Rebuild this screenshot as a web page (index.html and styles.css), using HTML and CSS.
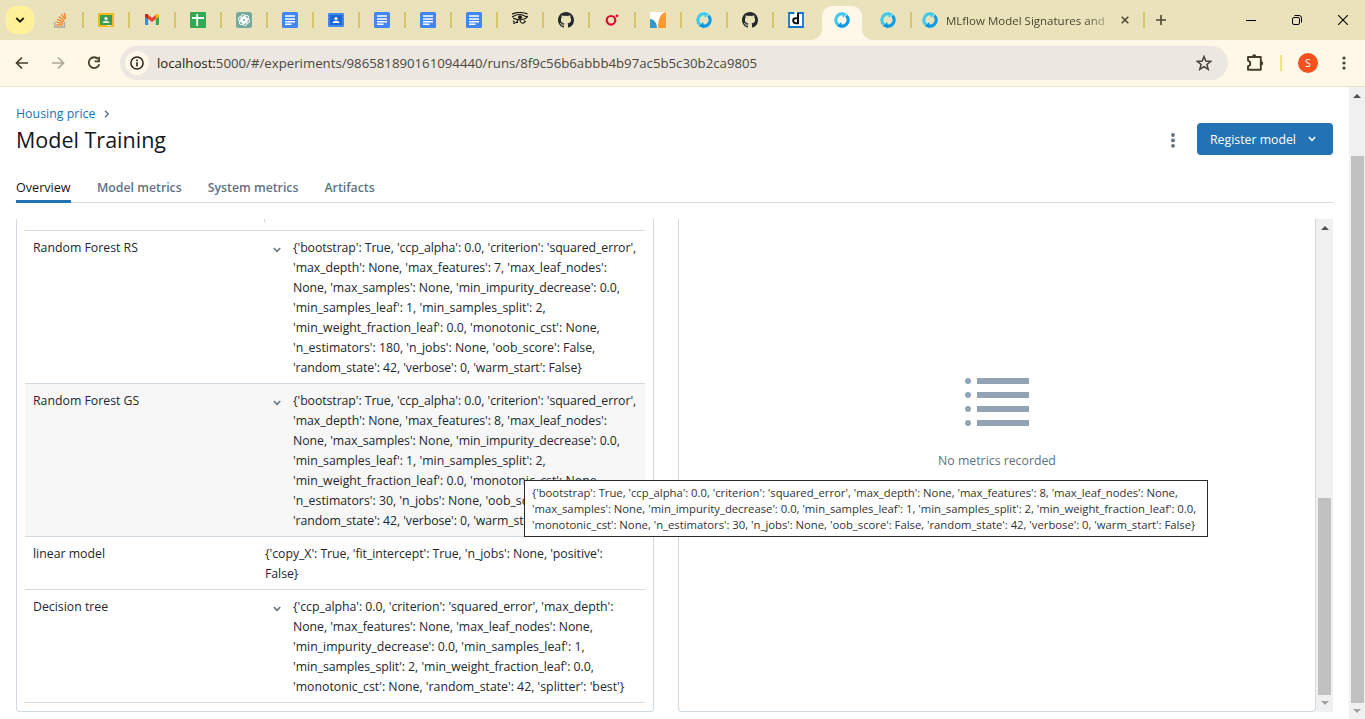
FILE: index.html
```html
<!DOCTYPE html>
<html lang="en">
<head>
<meta charset="utf-8">
<title>Model Training</title>
<link rel="stylesheet" href="styles.css">
</head>
<body>
<svg width="0" height="0" class="defs">
  <defs>
    <symbol id="docs" viewBox="0 0 16 16"><rect width="16" height="16" rx="1.5" fill="#4285f4"/><path d="M3 4h10M3 7h10M3 9.700h10M3 12.300h6.500" stroke="#fff" stroke-width="1.600"/></symbol>
    <symbol id="mlflow" viewBox="0 0 16 16"><path d="M4.300 12.900A6.200 6.200 0 0 1 9.600 2" fill="none" stroke="#43c9ed" stroke-width="3"/><path d="M8.200 0 13 1.700 8.800 6z" fill="#43c9ed"/><path d="M12.300 3.600A6.200 6.200 0 0 1 6.600 14" fill="none" stroke="#0f9ce6" stroke-width="3.100"/><path d="M7.800 16 2.900 14.300 7.200 10z" fill="#0194e2"/></symbol>
    <symbol id="github" viewBox="0 0 16 16"><path fill="#24292f" d="M8 0C3.58 0 0 3.58 0 8c0 3.54 2.29 6.53 5.47 7.59.4.07.55-.17.55-.38 0-.19-.01-.82-.01-1.49-2.01.37-2.53-.49-2.69-.94-.09-.23-.48-.94-.82-1.13-.28-.15-.68-.52-.01-.53.63-.01 1.08.58 1.23.82.72 1.21 1.87.87 2.33.66.07-.52.28-.87.51-1.07-1.78-.2-3.64-.89-3.64-3.95 0-.87.31-1.59.82-2.15-.08-.2-.36-1.02.08-2.12 0 0 .67-.21 2.2.82.64-.18 1.32-.27 2-.27s1.36.09 2 .27c1.53-1.04 2.2-.82 2.2-.82.44 1.1.16 1.92.08 2.12.51.56.82 1.27.82 2.15 0 3.07-1.87 3.75-3.65 3.95.29.25.54.73.54 1.48 0 1.07-.01 1.93-.01 2.2 0 .21.15.46.55.38A8.01 8.01 0 0 0 16 8c0-4.42-3.58-8-8-8z"/></symbol>
    <symbol id="chev" viewBox="0 0 8 6"><path d="M.8 1 4 4.300 7.200 1" fill="none" stroke="currentColor" stroke-width="1.500"/></symbol>
  </defs>
</svg>
<div class="tabstrip">
  <div class="tab-search"><svg width="10" height="6" viewBox="0 0 10 6"><path d="M1.300 1 5 4.600 8.700 1" fill="none" stroke="#1f1c0c" stroke-width="1.900"/></svg></div>
  <div class="tab"><svg viewBox="0 0 16 16"><path d="M2.800 10v5h9.700v-5" fill="none" stroke="#a9a9a3" stroke-width="1.300"/><path d="M4.300 12.900h6.800M4.500 10.200l6.700 1.100M5.200 7.300l6.300 2.700M7 4.500l5.200 4.200M9.400 2.200l3.800 5.200M12.400 1l1.200 5.200" stroke="#f48024" stroke-width="1.300"/></svg></div>
  <div class="tab"><svg viewBox="0 0 16 16"><rect y="1" width="16" height="14" rx="1" fill="#f5ba15"/><rect x="2" y="3" width="12" height="10" fill="#3c9b50"/><circle cx="8" cy="6.500" r="1.600" fill="#fff"/><path d="M4.500 11c0-3 7-3 7 0z" fill="#d9efdc"/><path d="M9 13h4v1H9z" fill="#e8f0e0"/></svg></div>
  <div class="tab"><svg viewBox="0 0 16 16"><path d="M1 3.500h3.200V13H2a1 1 0 0 1-1-1z" fill="#4285f4"/><path d="M11.800 3.500H15V12a1 1 0 0 1-1 1h-2.200z" fill="#34a853"/><path d="M1 4.500V3.200C1 2 2.500 1.500 3.600 2.400L8 5.800l4.400-3.400C13.500 1.500 15 2 15 3.200v1.300L8 9.900z" fill="#ea4335"/><path d="M11.800 3l.8-.7C13.500 1.600 15 2 15 3.200v1.600L11.800 7z" fill="#fbbc04"/><path d="M1 4.800V3.200C1 2 2.500 1.600 3.500 2.300l.7.600V7z" fill="#c5221f"/></svg></div>
  <div class="tab"><svg viewBox="0 0 16 16"><rect width="16" height="16" rx="1" fill="#34a853"/><path d="M7.200 2v12M2 6h12" stroke="#fff" stroke-width="1.800"/></svg></div>
  <div class="tab"><svg viewBox="0 0 16 16"><rect width="16" height="16" rx="2.500" fill="#74aa9c"/><g fill="none" stroke="#fff" stroke-width=".9"><rect x="5" y="2.500" width="4.400" height="8" rx="2.200"/><rect x="5" y="2.500" width="4.400" height="8" rx="2.200" transform="rotate(60 8 8)"/><rect x="5" y="2.500" width="4.400" height="8" rx="2.200" transform="rotate(120 8 8)"/><rect x="5" y="2.500" width="4.400" height="8" rx="2.200" transform="rotate(180 8 8)"/><rect x="5" y="2.500" width="4.400" height="8" rx="2.200" transform="rotate(240 8 8)"/><rect x="5" y="2.500" width="4.400" height="8" rx="2.200" transform="rotate(300 8 8)"/></g></svg></div>
  <div class="tab"><svg><use href="#docs"/></svg></div>
  <div class="tab"><svg viewBox="0 0 16 16"><rect y="1" width="16" height="14" rx="1" fill="#4285f4"/><rect x="2" y="3" width="12" height="10" fill="#1a67d2"/><circle cx="8" cy="6.500" r="1.600" fill="#fff"/><path d="M4.500 11c0-3 7-3 7 0z" fill="#fff"/></svg></div>
  <div class="tab"><svg><use href="#docs"/></svg></div>
  <div class="tab"><svg><use href="#docs"/></svg></div>
  <div class="tab"><svg><use href="#docs"/></svg></div>
  <div class="tab"><svg viewBox="0 0 16 16" fill="none" stroke="#15140e"><path d="M0 2.200Q6-1 15.500 1.800" stroke-width="1.200"/><path d="M0 5Q7 1 11 3.300T16 4M1 6q5 2.500 9 1.500T15.500 4.800M5.500 7.500v3.500M8 7.800c0 4 3 4 5 2.300 1-1.300-1-1.700-1-.6M6 8.500C5 10.500 3 11.500 1 11M1 8.800l1.500 1" stroke-width="1.100"/><circle cx="8" cy="5.300" r="1.500" fill="#15140e"/></svg></div>
  <div class="tab"><svg><use href="#github"/></svg></div>
  <div class="tab"><svg viewBox="0 0 16 16"><circle cx="7" cy="8.300" r="4.300" fill="none" stroke="#dc0a35" stroke-width="2.200"/><circle cx="13" cy="3.800" r="1.400" fill="#dc0a35"/></svg></div>
  <div class="tab"><svg viewBox="0 0 16 16"><path d="M0 0h16v16H0z" fill="#fff"/><path d="M16 0v16H8C8 8 10 1.500 16 0z" fill="#ff9a30"/><path d="M0 7c4 0 7 4 7 9H0z" fill="#3498cb"/></svg></div>
  <div class="tab"><svg><use href="#mlflow"/></svg></div>
  <div class="tab"><svg><use href="#github"/></svg></div>
  <div class="tab bare"><svg viewBox="0 0 16 16"><path d="M1 1h14v14H1z" fill="#fff" stroke="#1675c6" stroke-width="1.800"/><path d="M6.500 0h2.500v3H6.500z" fill="#fff"/><path d="M10 1v11.200M9.500 6.300H7.500Q5.200 6.300 5.200 8.500t2.300 2.700h2" fill="none" stroke="#111" stroke-width="2"/></svg></div>
  <div class="tab active"><svg><use href="#mlflow"/></svg></div>
  <div class="tab"><svg><use href="#mlflow"/></svg></div>
  <div class="tab wide"><svg><use href="#mlflow"/></svg><span class="tab-title">MLflow Model Signatures and</span><svg class="x" viewBox="0 0 8 8"><path d="M.7.7l6.600 6.600M7.300.7.7 7.300" stroke="#4c472f" stroke-width="1.500"/></svg></div>
  <div class="new-tab"><svg width="10" height="10" viewBox="0 0 10 10"><path d="M5 0v10M0 5h10" stroke="#4c472f" stroke-width="1.600"/></svg></div>
  <div class="window-buttons">
    <div><svg width="10" height="10"><path d="M0 5.500h10" stroke="#000"/></svg></div>
    <div><svg width="10" height="10" viewBox="0 0 10 10" fill="none" stroke="#000"><rect x=".5" y="2.500" width="7" height="7" rx="1.500"/><path d="M2.500.5H7Q9.500.5 9.500 3v4.500"/></svg></div>
    <div><svg width="10" height="10"><path d="M0 0l10 10M10 0 0 10" stroke="#000" stroke-width="1.100"/></svg></div>
  </div>
</div>
<div class="toolbar">
  <div class="nav">
    <svg width="14" height="14" viewBox="0 0 14 14" fill="none" stroke="#443f28" stroke-width="1.700"><path d="M13 7H2M7 1.500 1.500 7 7 12.500"/></svg>
    <svg width="14" height="14" viewBox="0 0 14 14" fill="none" stroke="#aca796" stroke-width="1.700"><path d="M1 7h11M7 1.500 12.500 7 7 12.500"/></svg>
    <svg width="14" height="14" viewBox="0 0 14 14"><path d="M11.300 3.200A5.400 5.400 0 1 0 12.300 8.300" fill="none" stroke="#443f28" stroke-width="1.800"/><path d="M13 .8v5.400H7.600V4.600h3.700V.8z" fill="#443f28"/></svg>
  </div>
  <div class="omnibox">
    <div class="site-info"><svg width="14" height="14" viewBox="0 0 14 14"><circle cx="7" cy="7" r="6.100" fill="none" stroke="#26241a" stroke-width="1.500"/><path d="M7 6.200V10.400M7 3.500v1.700" stroke="#26241a" stroke-width="1.600"/></svg></div>
    <div class="url"><b>localhost:</b>5000/#/experiments/986581890161094440/runs/8f9c56b6abbb4b97ac5b5c30b2ca9805</div>
    <svg class="star" width="16" height="16" viewBox="0 0 16 16"><path d="M8 1.500l1.800 4.600 5 .3-3.900 3.100 1.300 4.800L8 11.600l-4.200 2.700 1.300-4.800L1.200 6.400l5-.3z" fill="none" stroke="#45423a" stroke-width="1.500"/></svg>
  </div>
  <svg class="puzzle" width="18" height="18" viewBox="0 0 18 18"><path d="M2 3h12.800v12.800H2v-3.600c3-.5 3-5 0-5.600z" fill="none" stroke="#443f28" stroke-width="1.900" stroke-linejoin="round"/><path d="M6 2.500a2.200 2.200 0 0 1 4.400 0zM15 7a2.200 2.200 0 0 1 0 4.400z" fill="#443f28"/></svg>
  <i class="divider"></i>
  <div class="avatar">S</div>
  <svg class="menu" width="4" height="14" fill="#443f28"><circle cx="2" cy="2" r="1.600"/><circle cx="2" cy="7" r="1.600"/><circle cx="2" cy="12" r="1.600"/></svg>
</div>
<div class="viewport">
  <main>
    <div class="crumb">Housing price<svg width="6" height="8" viewBox="0 0 6 8"><path d="M1 .8 4.300 4 1 7.200" fill="none" stroke="#5f7281" stroke-width="1.400"/></svg></div>
    <div class="heading">
      <h1>Model Training</h1>
      <svg class="more" width="4" height="15" fill="#5f7281"><circle cx="2" cy="2" r="1.900"/><circle cx="2" cy="7.400" r="1.900"/><circle cx="2" cy="12.800" r="1.900"/></svg>
      <button>Register model<svg width="8" height="6"><use href="#chev"/></svg></button>
    </div>
    <nav class="tabs"><a class="on">Overview</a><a>Model metrics</a><a>System metrics</a><a>Artifacts</a></nav>
    <div class="scroller">
      <section class="card params">
        <div class="head"></div>
        <div class="row"><div class="key">Random Forest RS</div><svg class="chev"><use href="#chev"/></svg><div class="val"><span class="tight">{'bootstrap': True, 'ccp_alpha': 0.0, 'criterion': 'squared_error',</span><br><span class="snug">'max_depth': None, 'max_features': 7, 'max_leaf_nodes':</span><br><span class="snug">None, 'max_samples': None, 'min_impurity_decrease': 0.0,</span><br>'min_samples_leaf': 1, 'min_samples_split': 2,<br>'min_weight_fraction_leaf': 0.0, 'monotonic_cst': None,<br>'n_estimators': 180, 'n_jobs': None, 'oob_score': False,<br><span class="tight">'random_state': 42, 'verbose': 0, 'warm_start': False}</span></div></div>
        <div class="row hover"><div class="key">Random Forest GS</div><svg class="chev"><use href="#chev"/></svg><div class="val"><span class="tight">{'bootstrap': True, 'ccp_alpha': 0.0, 'criterion': 'squared_error',</span><br><span class="snug">'max_depth': None, 'max_features': 8, 'max_leaf_nodes':</span><br><span class="snug">None, 'max_samples': None, 'min_impurity_decrease': 0.0,</span><br>'min_samples_leaf': 1, 'min_samples_split': 2,<br>'min_weight_fraction_leaf': 0.0, 'monotonic_cst': None,<br>'n_estimators': 30, 'n_jobs': None, 'oob_score': False,<br><span class="tight">'random_state': 42, 'verbose': 0, 'warm_start': False}</span></div></div>
        <div class="row"><div class="key">linear model</div><div class="val"><span class="snug">{'copy_X': True, 'fit_intercept': True, 'n_jobs': None, 'positive':</span><br><span class="snug">False}</span></div></div>
        <div class="row"><div class="key">Decision tree</div><svg class="chev"><use href="#chev"/></svg><div class="val"><span class="snug">{'ccp_alpha': 0.0, 'criterion': 'squared_error', 'max_depth':</span><br><span class="snug">None, 'max_features': None, 'max_leaf_nodes': None,</span><br>'min_impurity_decrease': 0.0, 'min_samples_leaf': 1,<br><span class="snug">'min_samples_split': 2, 'min_weight_fraction_leaf': 0.0,</span><br>'monotonic_cst': None, 'random_state': 42, 'splitter': 'best'}</div></div>
      </section>
      <section class="card metrics">
        <svg width="64" height="48" fill="#92a4b3"><circle cx="3" cy="3" r="3"/><circle cx="3" cy="17" r="3"/><circle cx="3" cy="31" r="3"/><circle cx="3" cy="45" r="3"/><path d="M12 0h52v6H12zM12 14h52v6H12zM12 28h52v6H12zM12 42h52v6H12z"/></svg>
        <p>No metrics recorded</p>
      </section>
      <div class="bar inner"><i class="up"></i><i class="thumb"></i><i class="down"></i></div>
    </div>
  </main>
  <div class="bar outer"><i class="up"></i><i class="thumb"></i><i class="down"></i></div>
</div>
<div class="tooltip">{'bootstrap': True, 'ccp_alpha': 0.0, 'criterion': 'squared_error', 'max_depth': None, 'max_features': 8, 'max_leaf_nodes': None,<br>'max_samples': None, 'min_impurity_decrease': 0.0, 'min_samples_leaf': 1, 'min_samples_split': 2, 'min_weight_fraction_leaf': 0.0,<br>'monotonic_cst': None, 'n_estimators': 30, 'n_jobs': None, 'oob_score': False, 'random_state': 42, 'verbose': 0, 'warm_start': False}</div>
</body>
</html>
```
FILE: styles.css
```css
* { box-sizing: border-box; }
body {
  margin: 0; width: 1365px; height: 719px; overflow: hidden;
  display: flex; flex-direction: column; background: #fff;
  font-family: "Open Sans", "Noto Sans", sans-serif; font-size: 12.3px; color: #22282d;
}
svg { display: block; flex: none; }
.defs { position: absolute; }

.tabstrip { height: 40px; flex: none; display: flex; background: #eae2bb; padding-left: 6px; }
.tab-search { width: 28px; height: 28px; margin: 6px 4px 0 0; border-radius: 10px; background: #fff09a; display: flex; align-items: center; justify-content: center; }
.tab { width: 46px; display: flex; align-items: center; justify-content: center; position: relative; }
.tab svg { width: 16px; height: 16px; }
.tab::after { content: ""; position: absolute; right: -1px; top: 12px; width: 2px; height: 16px; background: #d7c766; }
.tab.bare::after { display: none; }
.tab-search + .tab { margin-left: -1px; }
.tab.active { width: 40px; height: 34px; margin: 6px 3px 0; padding-bottom: 6px; background: #fff8e8; border-radius: 10px 10px 0 0; }
.tab.active::before, .tab.active::after { content: ""; position: absolute; top: auto; bottom: 0; width: 10px; height: 10px; background: radial-gradient(circle at 0 0, transparent 9.5px, #fff8e8 10px); }
.tab.active::before { left: -10px; }
.tab.active::after { right: -10px; background: radial-gradient(circle at 100% 0, transparent 9.5px, #fff8e8 10px); }
.tab.wide { width: 233px; padding-left: 11px; justify-content: flex-start; }
.tab-title { width: 160px; margin: 0 15px 0 8px; white-space: nowrap; font-size: 11.5px; color: #4c472f; -webkit-mask-image: linear-gradient(90deg, #000 140px, transparent 170px); }
.tab .x { width: 8px; height: 8px; }
.new-tab { width: 34px; display: flex; align-items: center; justify-content: center; }
.window-buttons { margin-left: auto; display: flex; }
.window-buttons div { width: 46px; display: flex; align-items: center; justify-content: center; }
.window-buttons div:last-child { width: 45px; }

.toolbar { height: 47px; flex: none; display: flex; align-items: center; background: linear-gradient(90deg, #fff8e8, #fff8e8); border-bottom: 1px solid #e8e2cb; padding-left: 15px; }
.nav { width: 105px; display: flex; gap: 22px; }
.omnibox { width: 1108px; height: 34px; border-radius: 17px; background: #ece7e1; display: flex; align-items: center; padding-left: 5px; }
.site-info { width: 24px; height: 24px; border-radius: 50%; background: #fff8e8; display: flex; align-items: center; justify-content: center; }
.url { margin-left: 8px; font-size: 13.22px; color: #4a473e; white-space: nowrap; }
.url b { font-weight: 400; color: #1f1d16; }
.star { margin: 0 16px 0 auto; }
.puzzle { margin-left: 18px; }
.divider { width: 2px; height: 16px; margin-left: 16px; background: #f3e280; }
.avatar { width: 20px; height: 20px; margin-left: 16px; border-radius: 50%; background: #f4511e; color: #fff; font-size: 10.5px; line-height: 20px; text-align: center; }
.menu { margin-left: 24px; }

.viewport { flex: 1; display: flex; min-height: 0; }
main { width: 1349px; padding: 16px 16px 0; display: flex; flex-direction: column; }
.crumb { height: 20px; flex: none; padding-top: 2px; line-height: 18px; display: flex; align-items: center; gap: 9px; color: #2272b4; letter-spacing: .05px; }
.heading { height: 32px; display: flex; align-items: center; }
h1 { margin: 0; font-size: 21.5px; font-weight: 500; color: #11171c; }
.more { margin: 2px 0 0 auto; }
button { width: 136px; height: 32px; margin-left: 22px; padding: 0 17px 0 13px; border: 0; border-radius: 4px; background: #2272b4; color: #fff; font: 500 12.3px "Open Sans", sans-serif; display: flex; align-items: center; justify-content: space-between; }
.tabs { height: 48px; display: flex; gap: 26px; border-bottom: 1px solid #d1d9e1; }
.tabs a { height: 48px; padding-top: 21px; line-height: 24px; font-weight: 600; font-size: 12.3px; color: #5f7281; }
.tabs .on { width: 55px; font-size: 12.6px; color: #11171c; font-weight: 500; border-bottom: 3px solid #2272b4; }
.scroller { height: 500px; margin-top: 16px; display: flex; }
.card { height: 493px; border: 1px solid #d1d9e1; border-top: 0; border-radius: 0 0 4px 4px; }
.params { width: 638px; padding: 0 8px; }
.head { height: 12px; border-bottom: 1px solid #d1d9e1; position: relative; }
.head::before { content: ""; position: absolute; left: 239px; top: 0; width: 1px; height: 3px; background: #d1d9e1; }
.row { display: flex; padding: 7px 8px 5px; border-bottom: 1px solid #d1d9e1; line-height: 20px; }
.row.hover { background: #f7f7f7; }
.key { width: 232px; flex: none; }
.chev { width: 8px; height: 6px; margin: 9px 12px 0 8px; color: #5f7281; }
.val { white-space: nowrap; }
.tight { letter-spacing: -.075px; }
.snug { letter-spacing: -.045px; }
.metrics { width: 638px; margin-left: 24px; padding-top: 159px; display: flex; flex-direction: column; align-items: center; color: #5f7281; }
.metrics p { margin: 25px 0 0; line-height: 20px; }

.bar { width: 17px; flex: none; background: #f0f0f0; display: flex; flex-direction: column; align-items: center; }
.bar .up { border: 4px solid transparent; border-top: 0; border-bottom: 4px solid #505050; }
.bar .down { border: 4px solid transparent; border-bottom: 0; border-top: 4px solid #a3a3a3; }
.bar .thumb { width: 13px; background: #c1c1c1; }
.inner { height: 493px; padding-top: 7px; }
.inner .thumb { height: 197px; margin: 268px 0 6px; }
.outer { width: 16px; padding-top: 7px; }
.outer .thumb { height: 547px; margin: 58px 0 6px; }

.tooltip { position: absolute; left: 524px; top: 480px; width: 684px; height: 57px; padding: 4px 7px; background: #fff; border: 1px solid #2b2b2b; font-size: 11.3px; letter-spacing: -.015px; line-height: 16px; white-space: nowrap; color: #333; }
```
